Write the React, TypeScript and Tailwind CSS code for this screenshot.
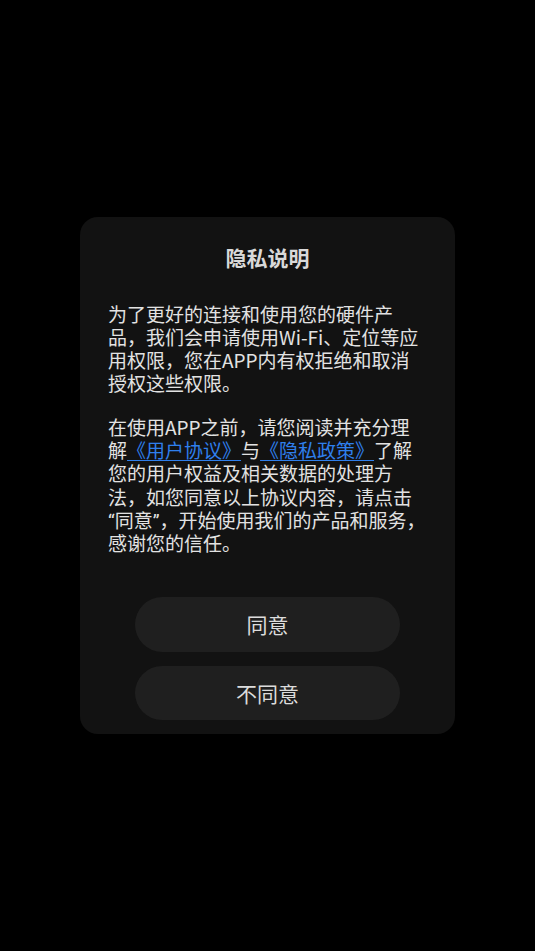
export default function App() {
  return (
    <div
      className="flex min-h-screen items-center justify-center bg-black"
      style={{ fontFamily: '"Noto Sans CJK SC", "Noto Sans", sans-serif' }}
    >
      <div className="flex w-[375px] flex-col rounded-[18px] bg-[#121212] px-[28px] pt-[26px] pb-[14px]">
        <h1 className="text-center text-[21px] font-bold leading-[28px] text-[#d9d9d9]">
          隐私说明
        </h1>

        <div className="mt-[31px] text-[19px] leading-[23.3px] text-[#e2e2e2]">
          <p>
            为了更好的连接和使用您的硬件产品，我们会申请使用Wi-Fi、定位等应用权限，您在APP内有权拒绝和取消授权这些权限。
          </p>
          <p className="mt-[20px]">
            在使用APP之前，请您阅读并充分理解
            <a className="text-[#2f7fec] underline decoration-1 underline-offset-[2px]">《用户协议》</a>
            与
            <a className="text-[#2f7fec] underline decoration-1 underline-offset-[2px]">《隐私政策》</a>
            了解您的用户权益及相关数据的处理方法，如您同意以上协议内容，请点击
            <wbr />
            <span className="font-['Roboto',sans-serif] leading-[0]">“</span>同意<span className="font-['Roboto',sans-serif] leading-[0]">”</span>
            ，开始使用我们的产品和服务，感谢您的信任。
          </p>
        </div>

        <div className="mt-[43px] flex flex-col items-center gap-[14px]">
          <button className="h-[55px] w-[265px] rounded-full bg-[#1f1f1f] text-[21px] text-[#dcdcdc]">
            同意
          </button>
          <button className="h-[54px] w-[265px] rounded-full bg-[#1f1f1f] text-[21px] text-[#dcdcdc]">
            不同意
          </button>
        </div>
      </div>
    </div>
  );
}
